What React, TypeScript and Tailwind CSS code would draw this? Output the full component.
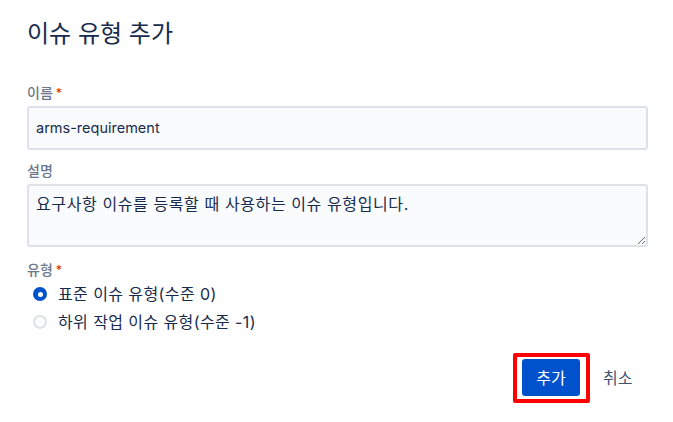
import { useState } from "react";

const font = "font-['Inter','Noto_Sans_CJK_KR',sans-serif]";

// 라벨 + 필수 표시
const FieldLabel = ({ text, required }: { text: string; required?: boolean }) => (
  <div className="flex h-4 items-center text-[14px] font-medium leading-4 text-[#6b778c]">
    <span>{text}</span>
    {required && <span className="ml-[3px] text-[12px] text-[#de350b]">*</span>}
  </div>
);

const Radio = ({ checked, label, onClick }: { checked: boolean; label: string; onClick: () => void }) => (
  <div className="flex h-[28px] cursor-pointer items-center" onClick={onClick}>
    <div className="flex w-[26px] justify-center">
      {checked ? (
        <div className="flex h-[14px] w-[14px] items-center justify-center rounded-full bg-[#0052cc]">
          <div className="h-[5px] w-[5px] rounded-full bg-white" />
        </div>
      ) : (
        <div className="h-[14px] w-[14px] rounded-full border-2 border-[#dfe1e6] bg-[#fafbfc]" />
      )}
    </div>
    <span className="ml-[5px] text-[16px] tracking-[0.4px] text-[#172b4d]">{label}</span>
  </div>
);

export default function App() {
  const [level, setLevel] = useState(0);

  return (
    <div className={`${font} h-[422px] w-[673px] bg-white pl-[27px] pr-[25px] pt-[20px]`}>
      <h1 className="h-[28px] text-[24px] font-normal leading-[28px] text-[#172b4d]">이슈 유형 추가</h1>

      <div className="mt-[37px]">
        <FieldLabel text="이름" required />
        <div className="mt-[5px] flex h-[44px] items-center rounded-[3px] border-2 border-[#dfe1e6] bg-[#fafbfc] px-[7px]">
          <span className="text-[14.5px] text-[#172b4d]">arms-requirement</span>
        </div>
      </div>

      <div className="mt-[13px]">
        <FieldLabel text="설명" />
        <textarea
          className="mt-[5px] block h-[63px] w-full resize-y rounded-[3px] border-2 border-[#dfe1e6] bg-[#fafbfc] px-[7px] pt-[7px] text-[16px] leading-[22px] tracking-[0.6px] text-[#172b4d] outline-none"
          defaultValue="요구사항 이슈를 등록할 때 사용하는 이슈 유형입니다."
        />
      </div>

      <div className="mt-[15px]">
        <FieldLabel text="유형" required />
        <div className="mt-[2px]">
          <Radio checked={level === 0} label="표준 이슈 유형(수준 0)" onClick={() => setLevel(0)} />
          <Radio checked={level === 1} label="하위 작업 이슈 유형(수준 -1)" onClick={() => setLevel(1)} />
        </div>
      </div>

      <div className="mt-[17px] flex items-center justify-end pr-[15px]">
        <div className="rounded-[2px] border-4 border-[#ff0000] pb-[3px] pl-[5px] pr-[6px] pt-[2px]">
          <button className="h-[37px] w-[58px] rounded-[3px] bg-[#0052cc] text-[16px] text-white">추가</button>
        </div>
        <button className="ml-[13px] w-[30px] whitespace-nowrap text-left text-[16px] text-[#42526e]">취소</button>
      </div>
    </div>
  );
}
